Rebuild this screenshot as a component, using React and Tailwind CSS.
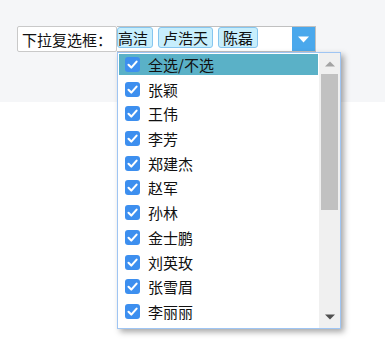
import React from "react";

const FONT = { fontFamily: '"Noto Sans CJK SC", "Noto Sans", sans-serif' };

const items = ["全选/不选", "张颖", "王伟", "李芳", "郑建杰", "赵军", "孙林", "金士鹏", "刘英玫", "张雪眉", "李丽丽"];

function Check() {
  return (
    <span className="w-[15px] h-[15px] rounded-[3px] bg-[#3d8fef] flex items-center justify-center shrink-0">
      <svg width="15" height="15" viewBox="0 0 15 15">
        <polyline points="3.5,7.8 6.3,10.6 11.6,4.6" fill="none" stroke="#fff" strokeWidth="2.1" strokeLinecap="round" strokeLinejoin="round" />
      </svg>
    </span>
  );
}

export default function App() {
  return (
    <div className="relative w-[385px] h-[351px] bg-white text-[#111] text-[15px]" style={FONT}>
      <div className="h-[102px] bg-[#f5f6f8] pt-[26px] pl-[17px] flex items-start">
        <div className="h-[26px] w-[100px] border border-[#c9c9c9] rounded-[2px] bg-white pl-[4px] flex items-center leading-none">
          下拉复选框：
        </div>
        <div className="h-[26px] w-[199px] border-y border-r border-[#c0c0c0] bg-white flex items-start">
          <div className="flex gap-[5px] pt-0">
            <span className="h-[21px] border border-[#86c6ef] bg-[#c7eefc] rounded-[3px] pl-0 pr-[4px] flex items-center leading-none">高洁</span>
            <span className="h-[21px] border border-[#86c6ef] bg-[#c7eefc] rounded-[3px] px-[4px] flex items-center leading-none">卢浩天</span>
            <span className="h-[21px] border border-[#86c6ef] bg-[#c7eefc] rounded-[3px] px-[4px] flex items-center leading-none">陈磊</span>
          </div>
          <div className="ml-auto w-[23px] h-[24px] bg-[#4aa8ec] flex items-center justify-center">
            <svg width="11" height="7" viewBox="0 0 11 7">
              <polygon points="0,0.5 11,0.5 5.5,6.5" fill="#fff" />
            </svg>
          </div>
        </div>
      </div>

      <div className="absolute left-[117px] top-[52px] w-[224px] h-[277px] border border-[#9fc5f3] bg-white flex shadow-[3px_3px_6px_rgba(0,0,0,0.35)]">
        <div className="flex-1 flex flex-col pt-px pl-px pr-px overflow-hidden">
          {items.map((name, i) => (
            <div
              key={name}
              className={
                "h-[21px] mb-[3.7px] shrink-0 flex items-center pl-[6px] " +
                (i === 0 ? "bg-[#5ab1c7]" : "")
              }
            >
              <Check />
              <span className="ml-[8px] leading-none">{name}</span>
            </div>
          ))}
        </div>
        <div className="w-[21px] bg-[#f0f0f0] flex flex-col items-center">
          <div className="h-[21px] flex items-center justify-center">
            <svg width="10" height="6" viewBox="0 0 10 6">
              <polygon points="0,5.5 10,5.5 5,0.5" fill="#a3a3a3" />
            </svg>
          </div>
          <div className="w-[17px] h-[136px] bg-[#c1c1c1]" />
          <div className="mt-auto mb-[6px] h-[10px] flex items-center justify-center">
            <svg width="10" height="6" viewBox="0 0 10 6">
              <polygon points="0,0.5 10,0.5 5,5.5" fill="#505050" />
            </svg>
          </div>
        </div>
      </div>
    </div>
  );
}
